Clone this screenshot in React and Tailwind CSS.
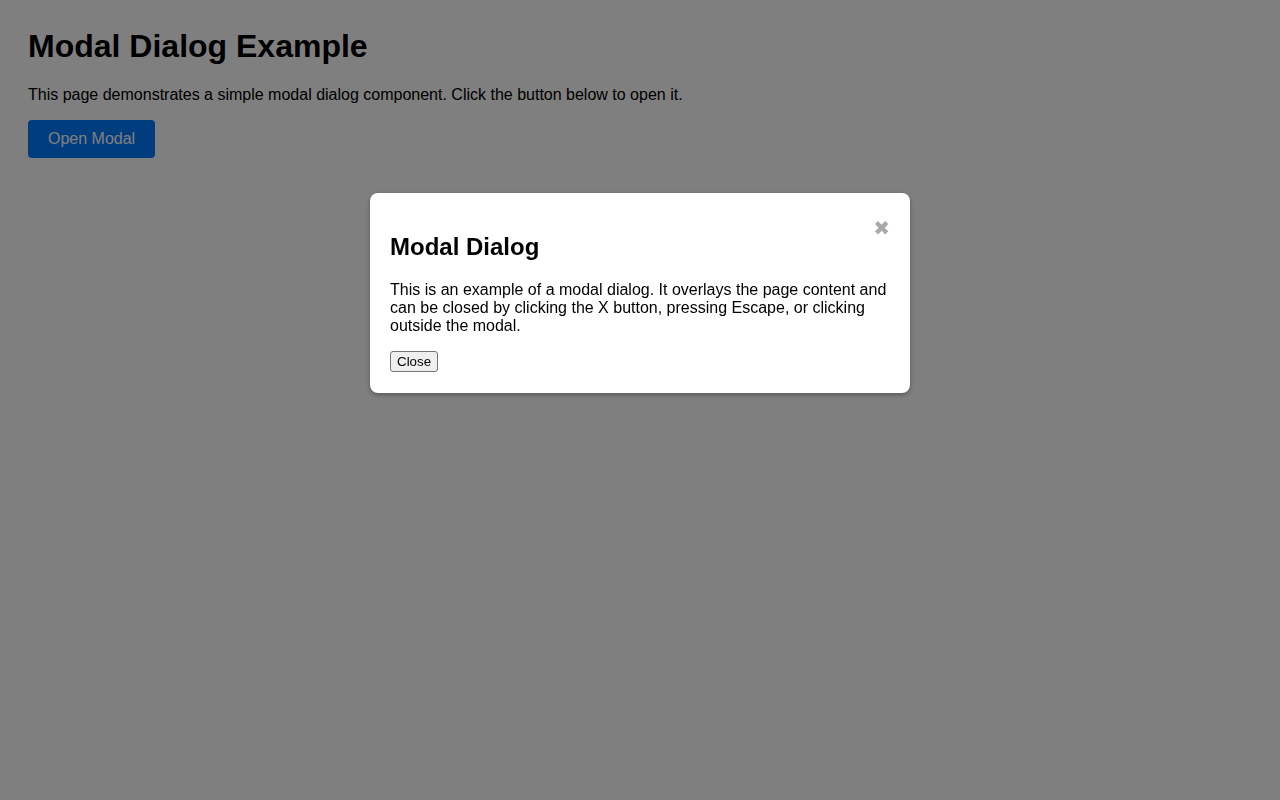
import { useState, useEffect } from "react";

export default function App() {
  const [open, setOpen] = useState(true);

  useEffect(() => {
    const onKey = (e) => e.key === "Escape" && setOpen(false);
    window.addEventListener("keydown", onKey);
    return () => window.removeEventListener("keydown", onKey);
  }, []);

  return (
    <div className="min-h-screen bg-white p-[28px] text-black font-['Liberation_Sans',Arial,sans-serif]">
      <h1 className="text-[32px] font-bold leading-[normal] mb-[21px]">Modal Dialog Example</h1>
      <p className="text-base leading-[normal] mb-4">
        This page demonstrates a simple modal dialog component. Click the button below to open it.
      </p>
      <button
        onClick={() => setOpen(true)}
        className="bg-[#007bff] text-white text-base leading-[normal] px-5 py-2.5 rounded"
      >
        Open Modal
      </button>

      {open && (
        <div
          className="fixed inset-0 bg-[rgba(0,0,0,0.5)] flex justify-center items-start pt-[193px]"
          onClick={() => setOpen(false)}
        >
          {/* dialog box */}
          <div
            className="w-[540px] bg-white rounded-lg p-5 shadow-[0_2px_5px_rgba(0,0,0,0.3)]"
            onClick={(e) => e.stopPropagation()}
          >
            <span
              onClick={() => setOpen(false)}
              className="float-right text-[#aaa] text-[20px] leading-none mt-[5px] cursor-pointer font-['DejaVu_Sans',sans-serif]"
            >
              ✖
            </span>
            <h2 className="text-2xl font-bold leading-[normal] my-[20px]">Modal Dialog</h2>
            <p className="text-base leading-[normal] mb-[14px]">
              This is an example of a modal dialog. It overlays the page content and can be closed by
              clicking the X button, pressing Escape, or clicking outside the modal.
            </p>
            <button
              onClick={() => setOpen(false)}
              className="bg-[#efefef] border border-[#767676] rounded-[3px] text-[13.33px] leading-[normal] px-[6px] py-[2px]"
            >
              Close
            </button>
          </div>
        </div>
      )}
    </div>
  );
}
